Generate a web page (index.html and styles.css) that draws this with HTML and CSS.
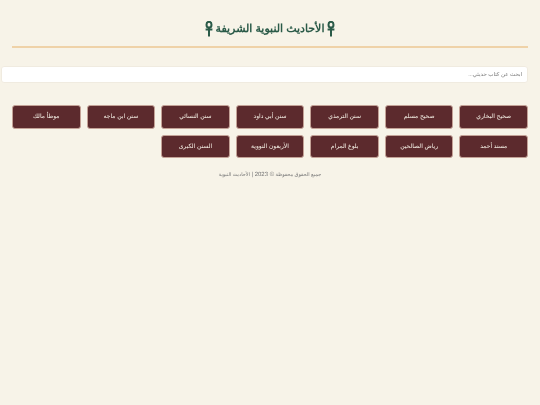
FILE: index.html
```html
<!DOCTYPE html>
<html lang="ar" dir="rtl">
<head>
<meta charset="utf-8">
<title>الأحاديث النبوية الشريفة</title>
<link rel="stylesheet" href="styles.css">
</head>
<body>
<div class="container">
  <header class="site-header">
    <h1>
      <svg class="ankh" viewBox="0 0 8 16" aria-hidden="true"><ellipse cx="4" cy="3.7" rx="2.5" ry="2.9"/><path d="M0.6 8.6H7.4M4 6.4V15.6"/></svg>
      <span>الأحاديث النبوية الشريفة</span>
      <svg class="ankh" viewBox="0 0 8 16" aria-hidden="true"><ellipse cx="4" cy="3.7" rx="2.5" ry="2.9"/><path d="M0.6 8.6H7.4M4 6.4V15.6"/></svg>
    </h1>
  </header>
  <div class="search"><input class="search-input" type="text" placeholder="ابحث عن كتاب حديثي..."></div>
  <div class="books">
    <a class="book">صحيح البخاري</a>
    <a class="book">صحيح مسلم</a>
    <a class="book">سنن الترمذي</a>
    <a class="book">سنن أبي داود</a>
    <a class="book">سنن النسائي</a>
    <a class="book">سنن ابن ماجه</a>
    <a class="book">موطأ مالك</a>
    <a class="book">مسند أحمد</a>
    <a class="book">رياض الصالحين</a>
    <a class="book">بلوغ المرام</a>
    <a class="book">الأربعون النووية</a>
    <a class="book">السنن الكبرى</a>
  </div>
  <footer class="site-footer">جميع الحقوق محفوظة <span class="year">© 2023 |</span> الأحاديث النبوية</footer>
</div>
</body>
</html>
```
FILE: styles.css
```css
* { box-sizing: border-box; }
html, body { margin: 0; padding: 0; }
body {
  background: #f7f3e8;
  font-family: "Liberation Sans", sans-serif;
  color: #333;
  text-rendering: geometricPrecision;
}
.container { padding: 0 12px; filter: blur(0.3px); }
.site-header {
  padding: 20px 0 8px;
  border-bottom: 2px solid #efd2a8;
}
.site-header h1 {
  display: flex;
  align-items: center;
  justify-content: center;
  gap: 3px;
  margin: 0;
  font-size: 11px;
  line-height: 18px;
  font-weight: bold;
  color: #2a5a48;
}
.ankh {
  width: 8px;
  height: 16px;
  fill: none;
  stroke: #2a5a48;
  stroke-width: 2;
}
.search { margin: 18px 0 0 -11px; }
.search-input {
  display: block;
  width: 100%;
  height: 17px;
  padding: 0 5px;
  border: 1px solid #f0ebe0;
  border-radius: 3px;
  background: #fff;
  font-family: inherit;
  font-size: 5.5px;
  text-rendering: geometricPrecision;
  outline: none;
}
.search-input::placeholder { color: #777; }
.books {
  display: grid;
  grid-template-columns: repeat(7, 1fr);
  gap: 6px;
  margin-top: 22px;
}
.book {
  display: flex;
  align-items: center;
  justify-content: center;
  height: 23.5px;
  border: 1px solid #c4a297;
  border-radius: 3px;
  background: #5c2a2d;
  color: #f7f3e8;
  font-size: 6px;
}
.site-footer {
  margin-top: 13px;
  text-align: center;
  font-size: 5px;
  line-height: 8px;
  color: #777;
}
.year { font-size: 6px; }
```
